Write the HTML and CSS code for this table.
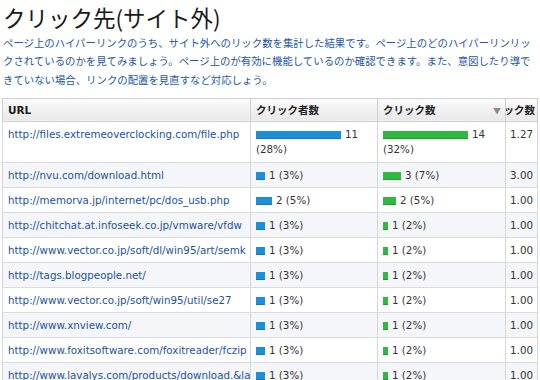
FILE: index.html
```html
<!DOCTYPE html>
<html lang="ja">
<head>
<meta charset="utf-8">
<title>クリック先(サイト外)</title>
<link rel="stylesheet" href="styles.css">
</head>
<body>
<div class="page">
  <h1 class="title">クリック先(サイト外)</h1>
  <p class="desc">ページ上のハイパーリンクのうち、サイト外へのリック数を集計した結果です。ページ上のどのハイパーリンリッ<br>クされているのかを見てみましょう。ページ上のが有効に機能しているのか確認できます。また、意図したり導で<br>きていない場合、リンクの配置を見直すなど対応しょう。</p>
  <table class="grid">
    <colgroup>
      <col class="c-url"><col class="c-users"><col class="c-clicks"><col class="c-avg">
    </colgroup>
    <thead>
      <tr>
        <th>URL</th>
        <th>クリック者数</th>
        <th class="sorted">クリック数<span class="arrow">▼</span></th>
        <th class="num-head"><span class="clip">平均クリック数</span></th>
      </tr>
    </thead>
    <tbody>
      <tr class="tall">
        <td><a href="#">http://files.extremeoverclocking.com/file.php</a></td>
        <td class="wrap"><span class="bar blue" style="width:85px"></span>11 (28%)</td>
        <td class="wrap"><span class="bar green" style="width:85px"></span>14 (32%)</td>
        <td class="num">1.27</td>
      </tr>
      <tr class="alt">
        <td><a href="#">http://nvu.com/download.html</a></td>
        <td><span class="bar blue" style="width:9px"></span>1 (3%)</td>
        <td><span class="bar green" style="width:18px"></span>3 (7%)</td>
        <td class="num">3.00</td>
      </tr>
      <tr>
        <td><a href="#">http://memorva.jp/internet/pc/dos_usb.php</a></td>
        <td><span class="bar blue" style="width:16px"></span>2 (5%)</td>
        <td><span class="bar green" style="width:13px"></span>2 (5%)</td>
        <td class="num">1.00</td>
      </tr>
      <tr class="alt">
        <td><a href="#">http://chitchat.at.infoseek.co.jp/vmware/vfdw</a></td>
        <td><span class="bar blue" style="width:9px"></span>1 (3%)</td>
        <td><span class="bar green" style="width:5px"></span>1 (2%)</td>
        <td class="num">1.00</td>
      </tr>
      <tr>
        <td><a href="#">http://www.vector.co.jp/soft/dl/win95/art/semk</a></td>
        <td><span class="bar blue" style="width:9px"></span>1 (3%)</td>
        <td><span class="bar green" style="width:5px"></span>1 (2%)</td>
        <td class="num">1.00</td>
      </tr>
      <tr class="alt">
        <td><a href="#">http://tags.blogpeople.net/</a></td>
        <td><span class="bar blue" style="width:9px"></span>1 (3%)</td>
        <td><span class="bar green" style="width:5px"></span>1 (2%)</td>
        <td class="num">1.00</td>
      </tr>
      <tr>
        <td><a href="#">http://www.vector.co.jp/soft/win95/util/se27</a></td>
        <td><span class="bar blue" style="width:9px"></span>1 (3%)</td>
        <td><span class="bar green" style="width:5px"></span>1 (2%)</td>
        <td class="num">1.00</td>
      </tr>
      <tr class="alt">
        <td><a href="#">http://www.xnview.com/</a></td>
        <td><span class="bar blue" style="width:9px"></span>1 (3%)</td>
        <td><span class="bar green" style="width:5px"></span>1 (2%)</td>
        <td class="num">1.00</td>
      </tr>
      <tr>
        <td><a href="#">http://www.foxitsoftware.com/foxitreader/fczip</a></td>
        <td><span class="bar blue" style="width:9px"></span>1 (3%)</td>
        <td><span class="bar green" style="width:5px"></span>1 (2%)</td>
        <td class="num">1.00</td>
      </tr>
      <tr class="alt">
        <td><a href="#">http://www.lavalys.com/products/download.&amp;lang</a></td>
        <td><span class="bar blue" style="width:9px"></span>1 (3%)</td>
        <td><span class="bar green" style="width:5px"></span>1 (2%)</td>
        <td class="num">1.00</td>
      </tr>
    </tbody>
  </table>
</div>
</body>
</html>
```
FILE: styles.css
```css
html, body {
  margin: 0;
  padding: 0;
  background: #ffffff;
}
.page {
  width: 540px;
  height: 380px;
  overflow: hidden;
  font-family: "DejaVu Sans", "Noto Sans CJK JP", sans-serif;
}
.title {
  margin: 0;
  padding: 2px 0 0 3px;
  height: 32px;
  font-family: "Noto Sans CJK JP", sans-serif;
  font-weight: 400;
  font-size: 22.5px;
  line-height: 30px;
  color: #1a1a1a;
  white-space: nowrap;
}
.desc {
  margin: 0 0 9px 3px;
  font-family: "Noto Sans CJK JP", sans-serif;
  font-size: 10.4px;
  line-height: 18.3px;
  color: #2456a4;
  white-space: nowrap;
}
.grid {
  margin-left: 2px;
  width: 535px;
  table-layout: fixed;
  border-collapse: collapse;
  font-size: 10.3px;
  color: #333;
}
.c-url { width: 248px; }
.c-users { width: 127px; }
.c-clicks { width: 128px; }
.c-avg { width: 32px; }
.grid th {
  height: 22px;
  padding: 0 5px;
  text-align: left;
  font-family: "Noto Sans CJK JP", sans-serif;
  font-size: 10.5px;
  font-weight: 700;
  color: #222;
  background: linear-gradient(#fbfbfb, #e8e8e8);
  border: 1px solid #cfcfcf;
  white-space: nowrap;
  overflow: hidden;
}
.grid th:first-child {
  font-family: "DejaVu Sans", sans-serif;
  font-size: 10.5px;
}
.grid th.sorted {
  position: relative;
}
.arrow {
  position: absolute;
  right: 4px;
  top: 6px;
  font-size: 8px;
  color: #8a8a8a;
  font-weight: 400;
}
.grid th.num-head {
  padding: 0 2px 0 0;
}
.clip {
  display: flex;
  justify-content: flex-end;
  overflow: hidden;
}
.grid td {
  height: 24px;
  box-sizing: border-box;
  padding: 5px 4px 4px 5px;
  line-height: 15px;
  vertical-align: top;
  border-left: 1px solid #d6d6d6;
  border-right: 1px solid #d6d6d6;
  border-bottom: 1px solid #dcdcdc;
  white-space: nowrap;
  overflow: hidden;
}
.grid tr.tall td {
  height: 41px;
  padding-top: 5px;
}
.grid td.wrap {
  white-space: normal;
}
.grid tr.alt td {
  background: #f4f6f9;
}
.grid td a {
  color: #22529e;
  text-decoration: none;
}
.grid td.num {
  text-align: right;
  padding: 5px 4px 4px 0;
  overflow: visible;
}
.bar {
  display: inline-block;
  height: 8px;
  margin-right: 4px;
  vertical-align: -1px;
  box-sizing: border-box;
}
.bar.blue {
  background: #1d8fd9;
  border-bottom: 1px solid #1676b8;
}
.bar.green {
  background: #2fba3f;
  border-bottom: 1px solid #209a30;
}
```
